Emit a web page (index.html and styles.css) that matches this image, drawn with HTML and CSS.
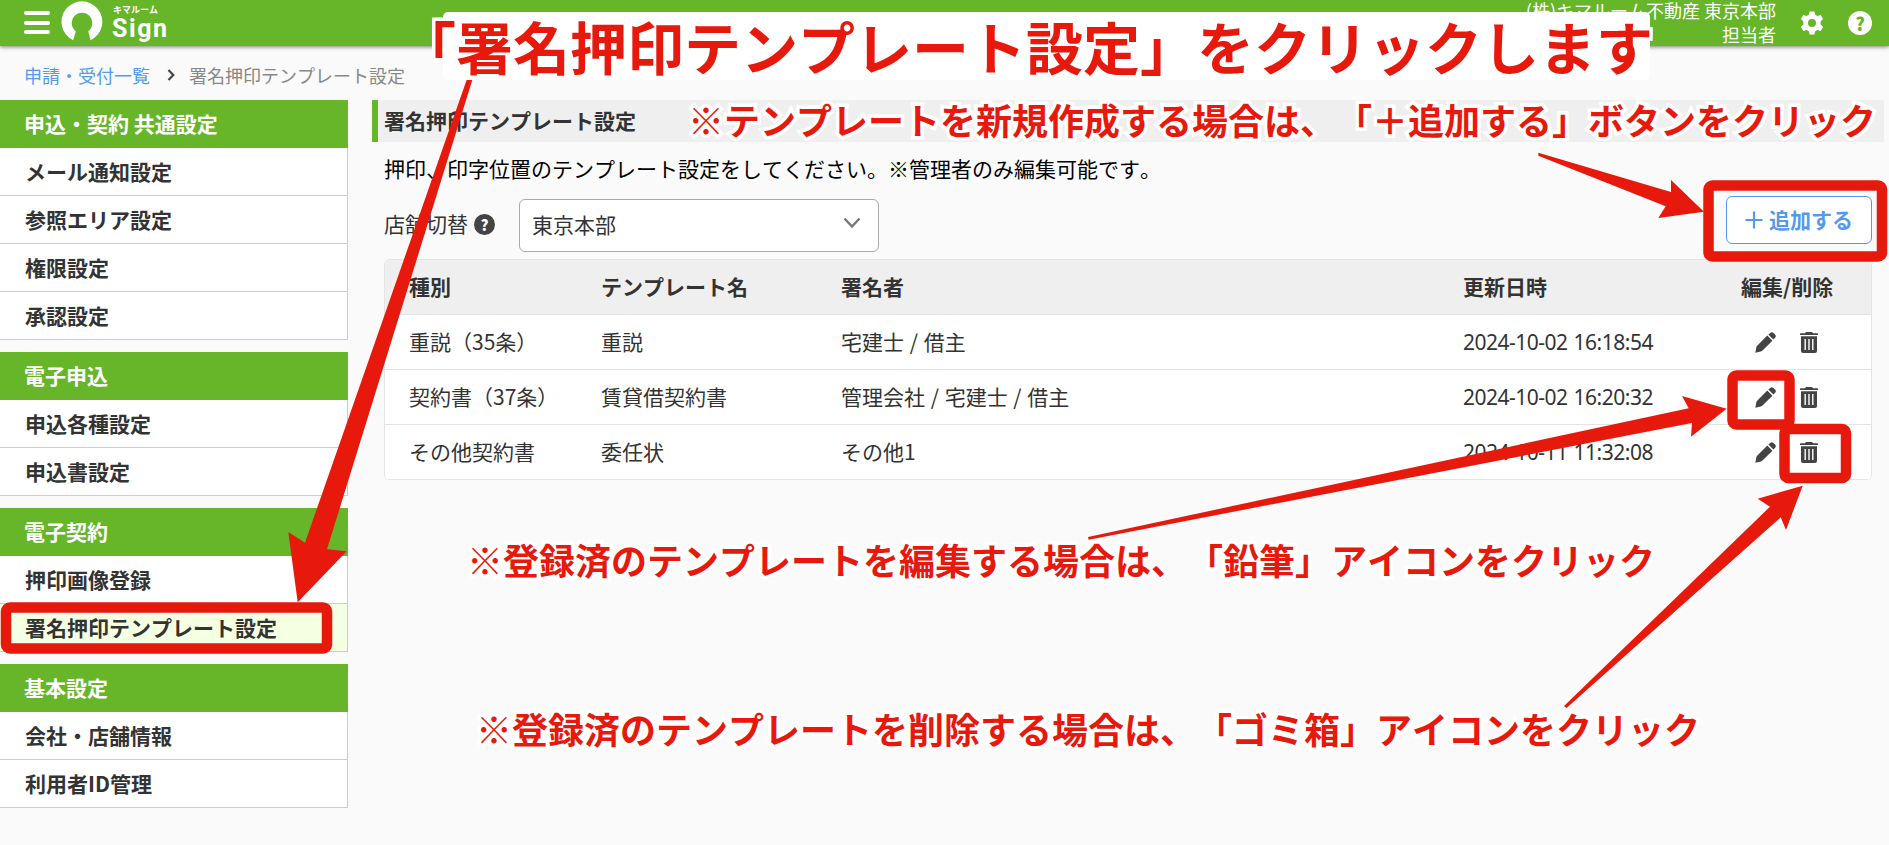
FILE: index.html
```html
<!DOCTYPE html>
<html lang="ja">
<head>
    <meta charset="UTF-8">
    <meta name="viewport" content="width=device-width, initial-scale=1.0">
    <title>署名押印テンプレート設定</title>

    <link rel="stylesheet" href="styles.css">
</head>
<body>
    <!-- icons -->
    <svg width="0" height="0" class="defs">
        <symbol id="pencil" viewBox="0 0 21 21">
            <path d="M0.3 20.7 L1.3 15.4 Q1.6 14.3 2.4 13.5 L12.3 3.6 L17.4 8.7 L7.5 18.5 Q6.8 19.2 5.8 19.5 Z"/>
            <path d="M13.4 2.6 L15.2 0.9 Q16.8 -0.5 18.5 0.9 L20.1 2.6 Q21.5 4.2 20.1 5.8 L18.4 7.6 Z"/>
        </symbol>
        <symbol id="trash" viewBox="0 0 18 21">
            <path d="M0.8 1.3 H5 L6 0 H12 L13 1.3 H17.2 Q18 1.3 18 2.1 V3 H0 V2.1 Q0 1.3 0.8 1.3 Z"/>
            <path fill-rule="evenodd" d="M1 4.2 H17 V19 Q17 21 15 21 H3 Q1 21 1 19 Z M4.5 7 V18 H5.9 V7 Z M8.3 7 V18 H9.7 V7 Z M12.1 7 V18 H13.5 V7 Z"/>
        </symbol>
    </svg>

    <header class="header">
        <div class="brand">
            <div class="menu-btn"><span></span><span></span><span></span></div>
            <svg class="logo" width="42" height="40" viewBox="0 0 42 40">
                <path d="M12.2 39.2 A20.4 20.4 0 1 1 29.6 39.2 L27.2 30.2 A10.3 10.3 0 1 0 14.8 30.2 Z"/>
            </svg>
            <div class="logo-text">
                <span class="logo-kana">キマルーム</span>
                <span class="logo-sign">Sign</span>
            </div>
        </div>
        <div class="user">
            <div class="user-name">(株)キマルーム不動産 東京本部<br>担当者</div>
            <svg class="gear" width="24" height="24" viewBox="0 0 24 24">
                <path fill-rule="evenodd" d="M9.6 0.5 H14.4 L15.1 3.8 L17.4 5.1 L20.7 4 L23.1 8.1 L20.6 10.4 V13.6 L23.1 15.9 L20.7 20 L17.4 18.9 L15.1 20.2 L14.4 23.5 H9.6 L8.9 20.2 L6.6 18.9 L3.3 20 L0.9 15.9 L3.4 13.6 V10.4 L0.9 8.1 L3.3 4 L6.6 5.1 L8.9 3.8 Z M12 8 A4 4 0 1 0 12 16 A4 4 0 1 0 12 8 Z"/>
            </svg>
            <span class="help help-header">?</span>
        </div>
    </header>

    <nav class="breadcrumb">
        <a class="breadcrumb-link">申請・受付一覧</a>
        <svg width="8" height="12" viewBox="0 0 8 12"><path d="M1.5 1 L6.3 6 L1.5 11"/></svg>
        <span>署名押印テンプレート設定</span>
    </nav>

    <div class="container">
        <aside class="sidebar">
            <div class="menu-group">
                <h2>申込・契約 共通設定</h2>
                <ul>
                    <li>メール通知設定</li>
                    <li>参照エリア設定</li>
                    <li>権限設定</li>
                    <li>承認設定</li>
                </ul>
            </div>
            <div class="menu-group">
                <h2>電子申込</h2>
                <ul>
                    <li>申込各種設定</li>
                    <li>申込書設定</li>
                </ul>
            </div>
            <div class="menu-group">
                <h2>電子契約</h2>
                <ul>
                    <li>押印画像登録</li>
                    <li class="active">署名押印テンプレート設定</li>
                </ul>
            </div>
            <div class="menu-group">
                <h2>基本設定</h2>
                <ul>
                    <li>会社・店舗情報</li>
                    <li>利用者ID管理</li>
                </ul>
            </div>
        </aside>

        <main class="main">
            <h1>署名押印テンプレート設定</h1>
            <p class="lead">押印、印字位置のテンプレート設定をしてください。※管理者のみ編集可能です。</p>
            <div class="toolbar">
                <span class="shop-label">店舗切替</span>
                <span class="help help-label">?</span>
                <div class="select">
                    <span>東京本部</span>
                    <svg width="18" height="12" viewBox="0 0 18 12"><path d="M1.5 1.5 L9 9.5 L16.5 1.5"/></svg>
                </div>
                <button class="add-btn">
                    <svg width="18" height="18" viewBox="0 0 18 18"><path d="M9 0.5 V17.5 M0.5 9 H17.5"/></svg>
                    <span>追加する</span>
                </button>
            </div>
            <div class="table">
                <div class="row row-head">
                    <span>種別</span><span>テンプレート名</span><span>署名者</span><span>更新日時</span><span>編集/削除</span>
                </div>
                <div class="row">
                    <span>重説（35条）</span><span>重説</span><span>宅建士 / 借主</span>
                    <span class="date">2024-10-02 16:18:54</span>
                    <span class="actions"><svg class="pencil"><use href="#pencil"/></svg><svg class="trash"><use href="#trash"/></svg></span>
                </div>
                <div class="row">
                    <span>契約書（37条）</span><span>賃貸借契約書</span><span>管理会社 / 宅建士 / 借主</span>
                    <span class="date">2024-10-02 16:20:32</span>
                    <span class="actions"><svg class="pencil"><use href="#pencil"/></svg><svg class="trash"><use href="#trash"/></svg></span>
                </div>
                <div class="row">
                    <span>その他契約書</span><span>委任状</span><span>その他1</span>
                    <span class="date">2024-10-11 11:32:08</span>
                    <span class="actions"><svg class="pencil"><use href="#pencil"/></svg><svg class="trash"><use href="#trash"/></svg></span>
                </div>
            </div>
        </main>
    </div>

    <!-- guide arrows and frames over the page -->
    <svg class="marks" width="1889" height="845" viewBox="0 0 1889 845">
        <g class="frames">
            <rect x="1708.5" y="185.5" width="173.5" height="71" rx="4"/>
            <rect x="6" y="607.5" width="321" height="41" rx="4"/>
            <rect x="1732.5" y="375.5" width="57" height="49" rx="4"/>
            <rect x="1784.5" y="429" width="61.5" height="49" rx="4"/>
        </g>
        <g class="arrows">
            <path d="M1538.3 152.7 L1671 192 V180 L1704 211.7 L1658.3 218 L1665.7 206.3 L1538.3 155.7 Z"/>
            <path d="M468 76 L305 542.7 L288.3 532 L297.7 602.3 L346.7 551.3 L327 549.3 L473.5 76 Z"/>
            <path d="M1088 537 L1688.7 408.3 L1682 396 L1726.7 408.7 L1691 436.7 L1692 423 L1088.6 539.8 Z"/>
            <path d="M1564 706 L1770 506.7 L1757.7 498.7 L1802.7 485.7 L1786 530 L1780.7 517.3 L1566.5 708 Z"/>
        </g>
    </svg>
    <div class="note-bg"></div>
    <div class="note note-title">「署名押印テンプレート設定」をクリックします</div>
    <div class="note note-add">※テンプレートを新規作成する場合は、「＋追加する」ボタンをクリック</div>
    <div class="note note-edit">※登録済のテンプレートを編集する場合は、「鉛筆」アイコンをクリック</div>
    <div class="note note-delete">※登録済のテンプレートを削除する場合は、「ゴミ箱」アイコンをクリック</div>
</body>
</html>
```
FILE: styles.css
```css
*{
    margin: 0;
    padding: 0;
    box-sizing: border-box;
}

body{
    position: relative;
    width: 1889px;
    height: 845px;
    overflow: hidden;
    background: #fafafa;
    color: #333;
    font-family: "Noto Sans CJK JP", sans-serif;
    font-size: 21px;
    line-height: 30px;
    font-kerning: none;
    text-spacing-trim: space-all;
}
.defs{
    position: absolute;
}

/* header */
.header{
    display: flex;
    justify-content: space-between;
    height: 46px;
    padding: 0 17px 0 24px;
    background: #67b529;
    color: white;
    box-shadow: 0 1px 4px rgba(0,0,0,0.5);
}
.brand{
    display: flex;
}
.menu-btn{
    display: flex;
    flex-direction: column;
    gap: 5.5px;
    width: 26px;
    padding-top: 11px;
}
.menu-btn span{
    height: 4px;
    border-radius: 2px;
    background: white;
}
.logo{
    margin: 1px 0 0 11px;
    fill: white;
}
.logo-text{
    display: flex;
    flex-direction: column;
    padding: 4px 0 0 10px;
}
.logo-kana{
    font-size: 9px;
    line-height: 11px;
    font-weight: 700;
}
.logo-sign{
    font-family: Roboto, sans-serif;
    font-size: 25px;
    line-height: 28px;
    font-weight: 700;
    letter-spacing: 1.6px;
    margin-left: -1px;
}
.user{
    display: flex;
    align-items: center;
}
.user-name{
    font-size: 18px;
    line-height: 24px;
    text-align: right;
    margin-top: -2px;
}
.gear{
    margin-left: 24px;
    fill: white;
}
.help{
    display: flex;
    justify-content: center;
    align-items: center;
    border-radius: 50%;
    font-weight: 900;
}
.help-header{
    width: 24px;
    height: 24px;
    margin-left: 24px;
    background: white;
    color: #67b529;
    font-size: 18px;
}
.help-label{
    width: 21px;
    height: 21px;
    margin: -2px 0 0 6px;
    background: #444;
    color: white;
    font-size: 15px;
}

.breadcrumb{
    display: flex;
    align-items: center;
    height: 54px;
    padding: 4px 0 0 24px;
    font-size: 18px;
    color: #888;
}
.breadcrumb svg{
    margin: 0 14px 0 17px;
    fill: none;
    stroke: #444;
    stroke-width: 2.2;
}
.breadcrumb-link{
    color: #5599ec;
}

.container{
    display: flex;
    gap: 24px;
}

/* sidebar */
.sidebar{
    display: flex;
    flex-direction: column;
    gap: 12px;
    width: 348px;
}
.menu-group h2{
    height: 48px;
    padding-left: 24px;
    background: #67b529;
    color: white;
    font-size: 21px;
    line-height: 47px;
}
.menu-group ul{
    list-style: none;
    border-right: 1px solid #ccc;
    background: white;
}
.menu-group li{
    height: 48px;
    padding-left: 25px;
    border-bottom: 1px solid #ccc;
    font-weight: 700;
    line-height: 47px;
}
.menu-group .active{
    background: #f5ffe1;
}

/* main */
.main{
    width: 1512px;
}
.main h1{
    height: 42px;
    padding-left: 6px;
    border-left: 6px solid #67b529;
    background: #efefef;
    font-size: 21px;
    line-height: 41px;
}
.lead{
    padding: 10px 12px 2px;
    color: #000;
    line-height: 33px;
}
.toolbar{
    display: flex;
    align-items: center;
    height: 53px;
    margin: 12px 12px 7px;
}
.shop-label{
    margin-top: -5px;
}
.select{
    display: flex;
    justify-content: space-between;
    align-items: center;
    width: 360px;
    height: 53px;
    margin-left: 24px;
    padding: 0 17px 3px 12px;
    border: 1px solid #aaa;
    border-radius: 6px;
    background: white;
}
.select svg{
    margin-top: -3px;
    fill: none;
    stroke: #777;
    stroke-width: 2.4;
}
.add-btn{
    display: flex;
    align-items: center;
    justify-content: center;
    gap: 6px;
    width: 146px;
    height: 48px;
    margin: -11px 0 0 auto;
    border: 1px solid #5599ec;
    border-radius: 6px;
    background: white;
    color: #5599ec;
    font-family: inherit;
    font-size: 21px;
    font-weight: 700;
}
.add-btn svg{
    fill: none;
    stroke: #5599ec;
    stroke-width: 2.2;
}
.add-btn span{
    margin-top: -2px;
}

.table{
    width: 1488px;
    margin-left: 12px;
    border: 1px solid #e4e4e4;
    border-bottom: none;
    border-radius: 6px;
    overflow: hidden;
    background: white;
}
.row{
    display: grid;
    grid-template-columns: 192px 240px 622px 278px 1fr;
    align-items: center;
    height: 55px;
    padding: 0 0 2px 24px;
    border-bottom: 1px solid #e4e4e4;
    word-spacing: 1px;
}
.row-head{
    background: #efefef;
    font-weight: 700;
}
.date{
    padding-top: 2px;
    font-family: "Noto Sans", sans-serif;
    letter-spacing: -0.5px;
}
.actions{
    display: flex;
    gap: 24px;
    padding: 2px 0 0 14px;
    fill: #444;
}
.pencil{
    width: 21px;
    height: 21px;
}
.trash{
    width: 18px;
    height: 21px;
}

/* guide marks */
.marks{
    position: absolute;
    left: 0;
    top: 0;
}
.frames{
    fill: none;
    stroke: #e7190c;
    stroke-width: 10.5;
}
.arrows{
    fill: #e7190c;
}
.note-bg{
    position: absolute;
    left: 443px;
    top: 12px;
    width: 1207px;
    height: 68px;
    border-radius: 5px;
    background: white;
}
.note{
    position: absolute;
    color: #e7190c;
    font-size: 36px;
    font-weight: 700;
    line-height: 50px;
    white-space: nowrap;
    -webkit-text-stroke: 7px white;
    paint-order: stroke fill;
    stroke-linejoin: round;
}
.note-title{
    left: 399px;
    top: 5px;
    font-size: 57px;
    line-height: 80px;
}
.note-add{
    left: 688px;
    top: 94px;
}
.note-edit{
    left: 467px;
    top: 534px;
}
.note-delete{
    left: 476px;
    top: 703px;
}
```
